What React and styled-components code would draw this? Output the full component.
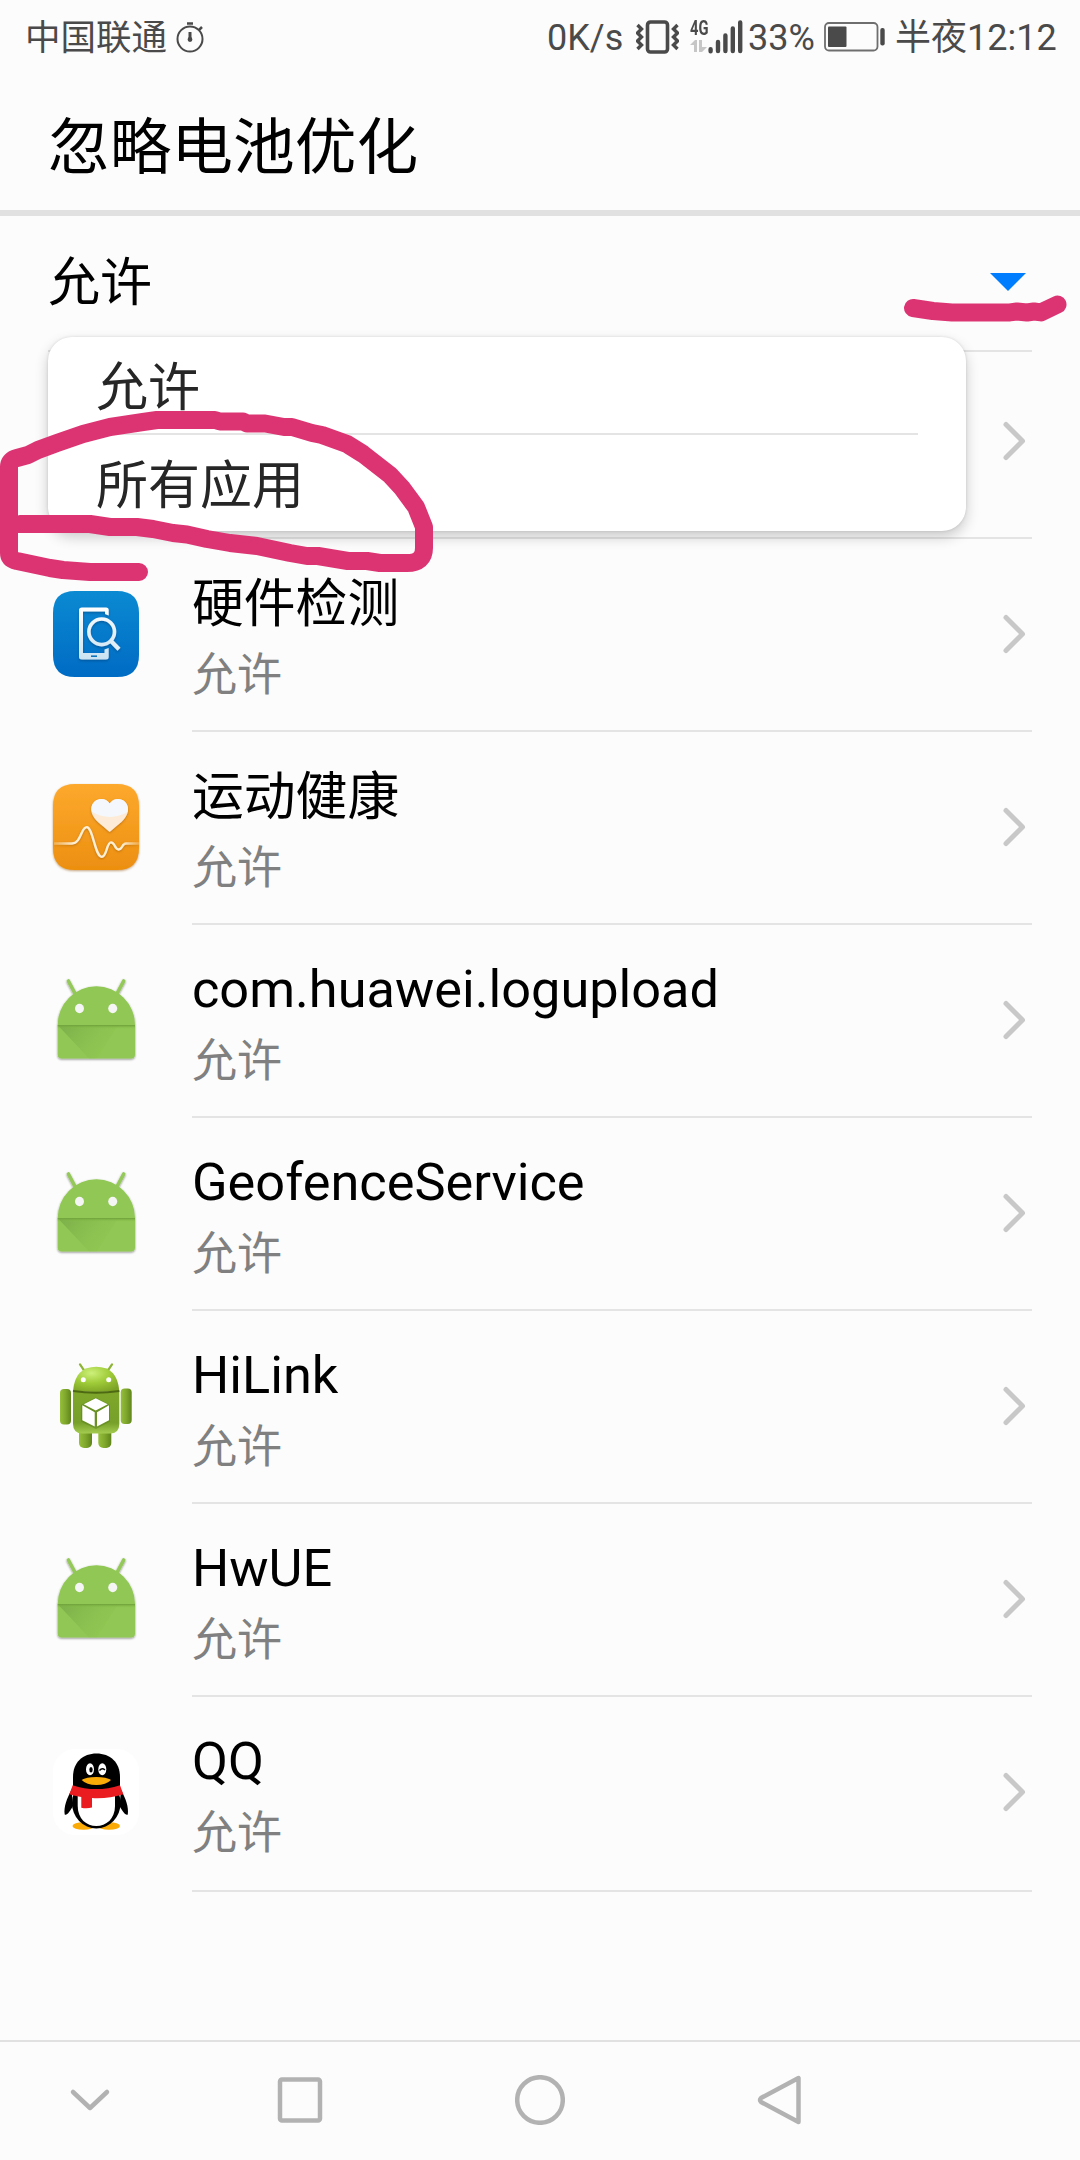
import React, { memo } from "react";
import styled, { createGlobalStyle } from "styled-components";

const GlobalStyle = createGlobalStyle`
  * {
    box-sizing: border-box;
    margin: 0;
    padding: 0;
  }
  body {
    background-color: #fcfcfc;
    font-family: Roboto, "Noto Sans CJK SC", sans-serif;
  }
  svg {
    display: block;
    flex-shrink: 0;
  }
`;

const Screen = styled.div`
  position: relative;
  display: flex;
  flex-direction: column;
  width: 1080px;
  height: 2160px;
  overflow: hidden;
  background-color: #fcfcfc;
`;

const StatusBar = styled.header`
  display: flex;
  justify-content: space-between;
  align-items: center;
  height: 74px;
  padding: 0 24px 0 25px;
  color: #4a4a4a;
`;

const StatusGroup = styled.div`
  display: flex;
  align-items: center;
`;

const StatusText = styled.span`
  width: ${(props) => props.$width}px;
  height: 74px;
  font-size: ${(props) => props.$size || 36}px;
  line-height: 76px;
  white-space: nowrap;
`;

const TitleBar = styled.div`
  height: 142px;
  padding-left: 48px;
  border-bottom: 6px solid #e1e1e1;
  h1 {
    font-size: 61.7px;
    font-weight: 400;
    line-height: 149px;
    color: #000;
  }
`;

const Filter = styled.div`
  position: relative;
  display: flex;
  justify-content: space-between;
  height: 136px;
  margin: 0 48px;
  padding-right: 6px;
  border-bottom: 2px solid #e4e4e4;
  font-size: 52px;
  line-height: 136px;
  color: #000;
`;

const Arrow = styled.i`
  width: 0;
  height: 0;
  margin-top: 57px;
  border: 18px solid transparent;
  border-top-color: #007dff;
  border-bottom: 0;
`;

const Menu = styled.ul`
  position: absolute;
  top: 121px;
  left: 0;
  z-index: 1;
  width: 918px;
  height: 194px;
  padding: 0 48px;
  border-radius: 24px;
  background-color: #fff;
  box-shadow: 0 6px 14px rgba(0, 0, 0, 0.2), 0 0 3px rgba(0, 0, 0, 0.12);
  list-style: none;
`;

const MenuItem = styled.li`
  height: 98px;
  line-height: 104px;
  font-size: 52px;
  color: #262626;
  & + & {
    border-top: 2px solid #e4e4e4;
    margin-top: -2px;
  }
`;

const List = styled.ul`
  flex: 1;
  list-style: none;
`;

const Row = styled.li`
  display: flex;
  height: ${(props) => props.$height || 193}px;
  padding: 0 48px 0 53px;
`;

const IconBox = styled.div`
  width: 86px;
  padding-top: 52px;
`;

const RowBody = styled.div`
  display: flex;
  flex: 1;
  justify-content: space-between;
  margin-left: 53px;
  padding-right: 5px;
  border-bottom: 2px solid #e4e4e4;
`;

const RowText = styled.div`
  padding-top: 32px;
  p {
    font-size: 45px;
    line-height: 65px;
    color: #808080;
  }
`;

const RowName = styled.h2`
  height: 72px;
  font-size: ${(props) => (props.$chinese ? 51.8 : 52.3)}px;
  font-weight: 400;
  line-height: ${(props) => (props.$chinese ? 67 : 64)}px;
  color: #000;
`;

const Chevron = styled.svg`
  width: 24px;
  height: 40px;
  margin-top: ${(props) => props.$top || 75}px;
  fill: none;
  stroke: #c8c8c8;
  stroke-width: 5;
  stroke-linecap: round;
  stroke-linejoin: round;
`;

const NavBar = styled.nav`
  display: flex;
  align-items: center;
  height: 120px;
  padding-left: 65px;
  border-top: 2px solid #e1e1e1;
  svg {
    margin-top: -2px;
    margin-right: 190px;
    fill: none;
    stroke: #b2b2b2;
    stroke-width: 4.5;
    stroke-linejoin: round;
    stroke-linecap: round;
  }
  svg:first-child {
    margin-right: 160px;
  }
`;

const Marker = styled.svg`
  position: absolute;
  top: 0;
  left: 0;
  z-index: 2;
  pointer-events: none;
  fill: none;
  stroke: #dc3473;
  stroke-width: 18;
  stroke-linecap: round;
  stroke-linejoin: round;
`;

const NetworkType = styled.div`
  display: flex;
  flex-direction: column;
  width: 18px;
  height: 36px;
  margin-left: 11px;
  b {
    display: block;
    width: 28px;
    height: 21px;
    font-size: 21px;
    font-weight: 700;
    line-height: 18px;
    transform: scaleX(0.7);
    transform-origin: left;
  }
`;

const Signal = styled.svg`
  width: 36px;
  height: 34px;
  margin-right: 4px;
  stroke: #4a4a4a;
  stroke-width: 4.4;
  stroke-linecap: round;
`;

const Battery = styled.svg`
  width: 62px;
  height: 30px;
  margin-right: 9px;
`;

const StopwatchIcon = () => (
  <svg width="30" height="36" viewBox="0 0 30 36" fill="none" stroke="#4a4a4a" strokeWidth="2">
    <circle cx="16" cy="20" r="12.5" />
    <path d="M13 4.500h6M25 11l3-3" strokeWidth="2.5" />
    <path d="M16 13v8" strokeWidth="3" />
    <circle cx="16" cy="20.5" r="1.4" fill="#4a4a4a" />
  </svg>
);

const VibrateIcon = () => (
  <svg width="43" height="34" viewBox="0 0 43 34" fill="none" stroke="#4a4a4a" strokeWidth="3.6">
    <rect x="11.5" y="2" width="20" height="30" rx="3" />
    <path d="M1.5 5l4 4-4 4 4 4-4 4 4 4-4 4M41.5 5l-4 4 4 4-4 4 4 4-4 4 4 4" strokeWidth="3.4" />
  </svg>
);

const DataIcon = () => (
  <svg width="18" height="13" viewBox="0 0 18 13" fill="#c6c6c6">
    <path d="M0 5l5-5h2v12H4V5zM9 0h3v7h5l-5 5H9z" />
  </svg>
);

const SignalIcon = () => (
  <Signal viewBox="0 0 36 34">
    <path d="M2.6 29.2v2M10 22v9M17.4 15.500v15.500M24.800 8.500v22.500M32.200 2.500v28.500" />
  </Signal>
);

const BatteryIcon = () => (
  <Battery viewBox="0 0 62 30">
    <rect x="1" y="1" width="52.500" height="27.500" rx="4" fill="none" stroke="#6e6e6e" strokeWidth="1.800" />
    <rect x="4" y="4.500" width="18.500" height="20.500" rx="1" fill="#4a4a4a" />
    <rect x="56.300" y="6" width="4.400" height="17.500" rx="2" fill="#4a4a4a" />
  </Battery>
);

const HardwareIcon = () => (
  <svg width="86" height="86" viewBox="0 0 86 86">
    <defs>
      <linearGradient id="hardwareBg" x2="0" y2="1">
        <stop stopColor="#0b8ad2" />
        <stop offset="1" stopColor="#006bc4" />
      </linearGradient>
      <linearGradient id="hardwareFg" gradientUnits="userSpaceOnUse" x1="0" y1="16" x2="0" y2="69">
        <stop stopColor="#fff" />
        <stop offset="1" stopColor="#c9e2f2" />
      </linearGradient>
      <filter id="hardwareShadow">
        <feDropShadow dx="0" dy="1.5" stdDeviation="1" floodColor="#003c75" floodOpacity=".5" />
      </filter>
    </defs>
    <path d="M22 0H64Q86 0 86 22V64Q86 86 64 86H22Q0 86 0 64V22Q0 0 22 0Z" fill="url(#hardwareBg)" />
    <g filter="url(#hardwareShadow)">
      <path
        fillRule="evenodd"
        fill="url(#hardwareFg)"
        d="M29 16.500H53Q55.700 16.500 55.700 19V24.500L52 23V20.500H30V62H51.500V58.500L55.700 57V66Q55.700 68.500 53 68.500H29Q26 68.500 26 66V19Q26 16.500 29 16.500Z"
      />
      <path d="M38 65.200h6" stroke="#1173bd" strokeWidth="1.600" />
      <circle cx="48.700" cy="40.800" r="12.800" fill="none" stroke="url(#hardwareFg)" strokeWidth="3.600" />
      <path d="M58 50l8 8.300" stroke="#e0eff8" strokeWidth="4.200" />
    </g>
  </svg>
);

const HealthIcon = () => (
  <svg width="86" height="86" viewBox="0 0 86 86" overflow="visible">
    <defs>
      <linearGradient id="healthBg" x2="0" y2="1">
        <stop stopColor="#fda92d" />
        <stop offset="1" stopColor="#ec8f10" />
      </linearGradient>
      <linearGradient id="healthLine" gradientUnits="userSpaceOnUse" x1="0" y1="0" x2="86" y2="0">
        <stop stopColor="#ffe3b5" stopOpacity=".3" />
        <stop offset=".25" stopColor="#fff0d5" />
        <stop offset=".8" stopColor="#fff0d5" />
        <stop offset="1" stopColor="#ffe3b5" stopOpacity=".3" />
      </linearGradient>
      <clipPath id="heartClip">
        <path d="M56.700 48C49 41 38.300 35 38.300 25.500 38.300 15 51 11.500 56.700 19.500 62.400 11.500 75 15 75 25.500 75 35 64.400 41 56.700 48Z" />
      </clipPath>
      <filter id="healthShadow">
        <feDropShadow dx="0" dy="1" stdDeviation="1" floodColor="#8a4a00" floodOpacity=".5" />
      </filter>
    </defs>
    <path
      d="M22 0H64Q86 0 86 22V64Q86 86 64 86H22Q0 86 0 64V22Q0 0 22 0Z"
      fill="url(#healthBg)"
      filter="url(#healthShadow)"
    />
    <g filter="url(#healthShadow)">
      <g clipPath="url(#heartClip)">
        <path d="M36 12h42v38H36z" fill="#fdebd7" />
        <path d="M36 12h42v14Q57 40 36 26Z" fill="#f4f8fc" />
      </g>
    </g>
    <path
      d="M1 59.500H19C28 59.500 28 43.200 33.700 43.200 40 43.200 42 72.800 48.700 72.800 54 72.800 53.500 58.300 58 58.300 62 58.300 61.500 65.500 65.700 65.500 69.500 65.500 69 59.500 73 59.500H86"
      fill="none"
      stroke="url(#healthLine)"
      strokeWidth="2.300"
      filter="url(#healthShadow)"
    />
  </svg>
);

const AndroidIcon = () => (
  <svg width="86" height="86" viewBox="0 0 86 86">
    <defs>
      <linearGradient id="androidFold" gradientUnits="userSpaceOnUse" x1="10" y1="48" x2="50" y2="80">
        <stop stopColor="#6fa044" stopOpacity=".6" />
        <stop offset="1" stopColor="#8bc34a" stopOpacity=".2" />
      </linearGradient>
      <linearGradient id="androidEdge" x2="0" y2="1">
        <stop stopColor="#6d9f3a" />
        <stop offset="1" stopColor="#8bc34a" stopOpacity="0" />
      </linearGradient>
      <filter id="androidShadow">
        <feDropShadow dx="0" dy="1" stdDeviation="0.8" floodOpacity=".45" />
      </filter>
    </defs>
    <g filter="url(#androidShadow)">
      <path d="M15.400 4l8 15M70.700 4l-8 15" stroke="#94c95a" strokeWidth="3.600" strokeLinecap="round" />
      <path d="M4.700 48a38.650 38.650 0 0 1 77.300 0v29.500q0 4-4 4H8.700q-4 0-4-4Z" fill="#91c854" />
    </g>
    <path d="M5 48.500h60l-21 33H36Z" fill="url(#androidFold)" />
    <path d="M4.700 48H82v4H4.700z" fill="url(#androidEdge)" />
    <ellipse cx="26.500" cy="31.500" rx="4.500" ry="4.700" fill="#f5f5f5" />
    <ellipse cx="59.700" cy="31.500" rx="4.500" ry="4.700" fill="#f5f5f5" />
  </svg>
);

const RobotIcon = () => (
  <svg width="86" height="86" viewBox="0 0 86 86">
    <defs>
      <radialGradient id="robotHead" cx=".4" cy=".25" r=".8">
        <stop stopColor="#cdf07a" />
        <stop offset=".5" stopColor="#9fcb38" />
        <stop offset="1" stopColor="#7da326" />
      </radialGradient>
      <linearGradient id="robotBody" x2="0" y2="1">
        <stop stopColor="#7fa72a" />
        <stop offset=".75" stopColor="#76a02a" />
        <stop offset="1" stopColor="#a5cc50" />
      </linearGradient>
      <linearGradient id="robotLimb">
        <stop stopColor="#96bf3c" />
        <stop offset=".5" stopColor="#7fa72c" />
        <stop offset="1" stopColor="#5f851b" />
      </linearGradient>
    </defs>
    <path d="M27 1.300l4 6M59 1.300l-4 6" stroke="#8db434" strokeWidth="2.200" strokeLinecap="round" />
    <rect x="7" y="26" width="11" height="35.500" rx="4" fill="url(#robotLimb)" />
    <rect x="67.700" y="25.500" width="11" height="35.500" rx="4" fill="url(#robotLimb)" />
    <rect x="26" y="60" width="13" height="25" rx="5" fill="url(#robotLimb)" />
    <rect x="45.300" y="60" width="13" height="25" rx="5" fill="url(#robotLimb)" />
    <path d="M20 28Q22 3.800 43.200 3.800T66.300 28Q43 30 20 28Z" fill="url(#robotHead)" />
    <path d="M20 28Q43 31 66.300 28V61Q66.300 70.500 57 70.500H29.500Q20 70.500 20 61Z" fill="url(#robotBody)" />
    <path d="M20 28Q43 31.500 66.300 28" fill="none" stroke="#4d6912" strokeWidth="1.800" />
    <circle cx="30.300" cy="16.800" r="2.500" fill="#fff" />
    <circle cx="55.700" cy="16.800" r="2.500" fill="#fff" />
    <path d="M28 42l14.700-7.500L57 42v16.500L43 66l-15-7.500Z" fill="#5a801c" opacity=".5" />
    <path
      d="M42.700 35.200l12 6-12 6.300-12-6.300ZM29.300 42.200l12.400 7v14.300l-12.400-6.300ZM56 42.200l-12 7v14.300l12-6.300Z"
      fill="#fff"
    />
  </svg>
);

const PenguinIcon = () => (
  <svg width="86" height="86" viewBox="0 0 86 86">
    <rect width="86" height="86" rx="22" fill="#fff" />
    <ellipse cx="30.500" cy="77" rx="11" ry="3.800" fill="#faab07" />
    <ellipse cx="56" cy="77" rx="11" ry="3.800" fill="#faab07" />
    <path
      d="M18.500 41C14 49 10.500 58 11.700 65.500 14 67 17 62 20 57ZM68 41C72.500 49 76 58 74.800 65.500 72.500 67 69.500 62 66.500 57Z"
      fill="#000"
    />
    <ellipse cx="43.300" cy="54" rx="24.300" ry="25.500" fill="#000" />
    <path d="M20 38V28C20 13 30 4.500 43.500 4.500S67 13 67 28V38Z" fill="#000" />
    <path d="M24.700 46H62V57C62 70 53 77 43.300 77S24.700 70 24.700 57Z" fill="#fff" />
    <path
      d="M19.700 36.200Q43 44 67 36.200L70.300 45.200Q55 50 39 49V58.500Q34 60 28.300 58.800V48Q21 47 16.300 45.200Z"
      fill="#eb1c20"
    />
    <ellipse cx="37" cy="20.200" rx="4" ry="6" fill="#fff" />
    <ellipse cx="49.300" cy="20.200" rx="4" ry="6" fill="#fff" />
    <ellipse cx="38" cy="20.700" rx="1.700" ry="2.700" fill="#000" />
    <path d="M46.500 21.500q2.500-3 5.500-.5" fill="none" stroke="#000" strokeWidth="1.400" />
    <path d="M28.700 31Q33 28 43.300 28T58 31Q53 36 43.300 36T28.700 31Z" fill="#faab07" />
  </svg>
);

const apps = [
  { name: "硬件检测", Icon: HardwareIcon, chinese: true },
  { name: "运动健康", Icon: HealthIcon, chinese: true },
  { name: "com.huawei.logupload", Icon: AndroidIcon },
  { name: "GeofenceService", Icon: AndroidIcon },
  { name: "HiLink", Icon: RobotIcon },
  { name: "HwUE", Icon: AndroidIcon },
  { name: "QQ", Icon: PenguinIcon, height: 195 },
];

const AppRow = memo(({ name, Icon, chinese, height }) => (
  <Row $height={height}>
    <IconBox>
      <Icon />
    </IconBox>
    <RowBody>
      <RowText>
        <RowName $chinese={chinese}>{name}</RowName>
        <p>允许</p>
      </RowText>
      <Chevron viewBox="0 0 24 40">
        <path d="M3 3.500L19.500 20 3 36.500" />
      </Chevron>
    </RowBody>
  </Row>
));

const App = () => {
  return (
    <>
      <GlobalStyle />
      <Screen>
        <StatusBar>
          <StatusGroup>
            <StatusText $width={149} $size={35.5}>
              中国联通
            </StatusText>
            <StopwatchIcon />
          </StatusGroup>
          <StatusGroup>
            <StatusText $width={89}>0K/s</StatusText>
            <VibrateIcon />
            <NetworkType>
              <b>4G</b>
              <DataIcon />
            </NetworkType>
            <SignalIcon />
            <StatusText $width={76}>33%</StatusText>
            <BatteryIcon />
            <StatusText $width={161}>半夜12:12</StatusText>
          </StatusGroup>
        </StatusBar>
        <TitleBar>
          <h1>忽略电池优化</h1>
        </TitleBar>
        <Filter>
          <span>允许</span>
          <Arrow />
          <Menu>
            <MenuItem>允许</MenuItem>
            <MenuItem>所有应用</MenuItem>
          </Menu>
        </Filter>
        <List>
          <Row $height={187}>
            <IconBox />
            <RowBody>
              <span />
              <Chevron $top={69} viewBox="0 0 24 40">
                <path d="M3 3.500L19.500 20 3 36.500" />
              </Chevron>
            </RowBody>
          </Row>
          {apps.map((app) => (
            <AppRow key={app.name} {...app} />
          ))}
        </List>
        <NavBar>
          <svg width="50" height="50" viewBox="0 0 50 50">
            <path d="M8 17l17 16 17-16" />
          </svg>
          <svg width="50" height="50" viewBox="0 0 50 50">
            <rect x="5" y="4.500" width="40" height="41" rx="2" />
          </svg>
          <svg width="50" height="50" viewBox="0 0 50 50">
            <circle cx="25" cy="25" r="22.800" />
          </svg>
          <svg width="50" height="50" viewBox="0 0 50 50">
            <path d="M43.500 3v44L6 27q-2-2 0-4Z" />
          </svg>
        </NavBar>
        <Marker width="1080" height="2160" viewBox="0 0 1080 2160">
          <path d="M913 308L933 311 952 312.400H1010L1017 311.500 1027 312.500 1034 311.500 1041 312.400 1057.500 304.500" />
          <path d="M20 524H90L110 527H137L153 529 173 533 187 534.500 207 539 230 543 257 546 290 553 307 556H318L330 558 348 561H367L380 563H407Q424 563 424 548V527L416 507 402 488 390 475 363 454 347 444 322 435 312 433 292 427H284L265 423.500H247L243 421.500H220L215 420H157L143 422 110 427 83 434 57 443 38 450 28 455 17 458Q9 460 9 467V553Q9 559 17 561L50 568 63 570 90 572H139" />
        </Marker>
      </Screen>
    </>
  );
};

export default App;
